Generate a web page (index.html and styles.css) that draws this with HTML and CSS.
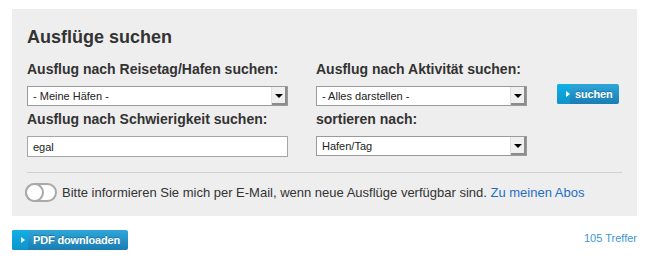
FILE: index.html
```html
<!DOCTYPE html>
<html lang="de">
<head>
  <meta charset="UTF-8" />
  <title>Ausflüge suchen</title>
  <meta name="viewport" content="width=device-width, initial-scale=1.0" />
  <link rel="stylesheet" href="styles.css">
</head>
<body>
  <div class="page">
    <div class="search-panel">
      <h2 class="title">Ausflüge suchen</h2>

      <div class="filters">
        <div class="field">
          <label class="field-label">Ausflug nach Reisetag/Hafen suchen:</label>
          <div class="select">
            <span class="select-value">- Meine Häfen -</span>
            <span class="select-arrow"></span>
          </div>
        </div>

        <div class="field">
          <label class="field-label">Ausflug nach Aktivität suchen:</label>
          <div class="select">
            <span class="select-value">- Alles darstellen -</span>
            <span class="select-arrow"></span>
          </div>
        </div>

        <div class="submit-cell">
          <button class="btn"><span class="btn-icon"></span><span class="btn-text">suchen</span></button>
        </div>

        <div class="field">
          <label class="field-label">Ausflug nach Schwierigkeit suchen:</label>
          <input class="text-input" type="text" value="egal">
        </div>

        <div class="field">
          <label class="field-label">sortieren nach:</label>
          <div class="select">
            <span class="select-value">Hafen/Tag</span>
            <span class="select-arrow"></span>
          </div>
        </div>
      </div>

      <div class="notify">
        <span class="toggle"><span class="toggle-knob"></span></span>
        <span class="notify-text">Bitte informieren Sie mich per E-Mail, wenn neue Ausflüge verfügbar sind. <a href="#" class="notify-link">Zu meinen Abos</a></span>
      </div>
    </div>

    <div class="results-bar">
      <button class="btn"><span class="btn-icon"></span><span class="btn-text">PDF downloaden</span></button>
      <span class="hits">105 Treffer</span>
    </div>
  </div>
</body>
</html>
```

FILE: styles.css
```css
* {
  box-sizing: border-box;
}

body {
  margin: 0;
  font-family: 'Liberation Sans', Arial, sans-serif;
  color: #333;
  background: #fff;
}

.page {
  padding: 9px 9px 0 12px;
}

.search-panel {
  background: #eeeeee;
  padding: 18px 15px 14px 15px;
}

.title {
  margin: 0 0 14px 0;
  font-size: 18px;
  line-height: 20px;
  font-weight: bold;
  color: #333;
}

.filters {
  display: grid;
  grid-template-columns: 261px 211px 64px;
  column-gap: 28px;
  row-gap: 5px;
  padding-bottom: 15px;
  border-bottom: 1px solid #cfcfcf;
}

.field {
  display: flex;
  flex-direction: column;
}

.field-label {
  display: block;
  font-size: 14px;
  line-height: 16px;
  font-weight: bold;
  color: #333;
  margin-bottom: 9px;
}

.select {
  display: flex;
  align-items: stretch;
  height: 20px;
  background: #fff;
  border: 1px solid #9a9a9a;
  font-size: 11px;
  color: #222;
}

.select-value {
  flex: 1;
  padding-left: 5px;
  line-height: 18px;
}

.select-arrow {
  width: 16px;
  display: flex;
  align-items: center;
  justify-content: center;
  background: #f0f0f0;
  border-left: 1px solid #e2e2e2;
  box-shadow: inset -2px -2px 0 #8c8c8c;
}

.select-arrow::after {
  content: "";
  margin: -1px 1px 0 0;
  border-left: 4px solid transparent;
  border-right: 4px solid transparent;
  border-top: 4px solid #000;
}

.text-input {
  height: 21px;
  width: 100%;
  margin: 0;
  border: 1px solid #a6a6a6;
  background: #fff;
  padding: 0 5px;
  font-family: inherit;
  font-size: 11px;
  color: #222;
  outline: none;
}

.submit-cell {
  display: flex;
  align-items: flex-end;
  padding-bottom: 2px;
  margin-left: 2px;
}

.btn {
  display: inline-flex;
  align-items: stretch;
  height: 20px;
  padding: 0;
  border: none;
  border-radius: 2px;
  overflow: hidden;
  background: linear-gradient(#2ea6da, #1a7db4);
  cursor: pointer;
  font-family: inherit;
}

.btn-icon {
  width: 16px;
  display: flex;
  align-items: center;
  padding-left: 9px;
  background: linear-gradient(#0fb0e6, #0f93cc);
}

.btn-icon::after {
  content: "";
  border-top: 3px solid transparent;
  border-bottom: 3px solid transparent;
  border-left: 4px solid #fff;
}

.btn-text {
  padding: 0 8px 0 5px;
  font-size: 11px;
  line-height: 20px;
  font-weight: bold;
  letter-spacing: -0.15px;
  color: #fff;
  text-shadow: 0 -1px 0 rgba(0, 0, 0, 0.25);
}

.notify {
  display: flex;
  align-items: center;
  margin-top: 10px;
}

.toggle {
  display: flex;
  width: 32px;
  height: 19px;
  margin-left: -2px;
  border: 2px solid #a9a9a9;
  border-radius: 10px;
  background: #fff;
}

.toggle-knob {
  width: 19px;
  height: 19px;
  margin: -2px 0 0 -2px;
  border: 2px solid #a9a9a9;
  border-radius: 50%;
  background: #fff;
}

.notify-text {
  margin-left: 5px;
  font-size: 13px;
  line-height: 16px;
  color: #333;
}

.notify-link {
  color: #1f6fc5;
  text-decoration: none;
}

.results-bar {
  display: flex;
  justify-content: space-between;
  align-items: flex-start;
  margin-top: 14px;
}

.hits {
  margin-top: 2px;
  font-size: 11px;
  line-height: 13px;
  color: #3b97d6;
}
```
